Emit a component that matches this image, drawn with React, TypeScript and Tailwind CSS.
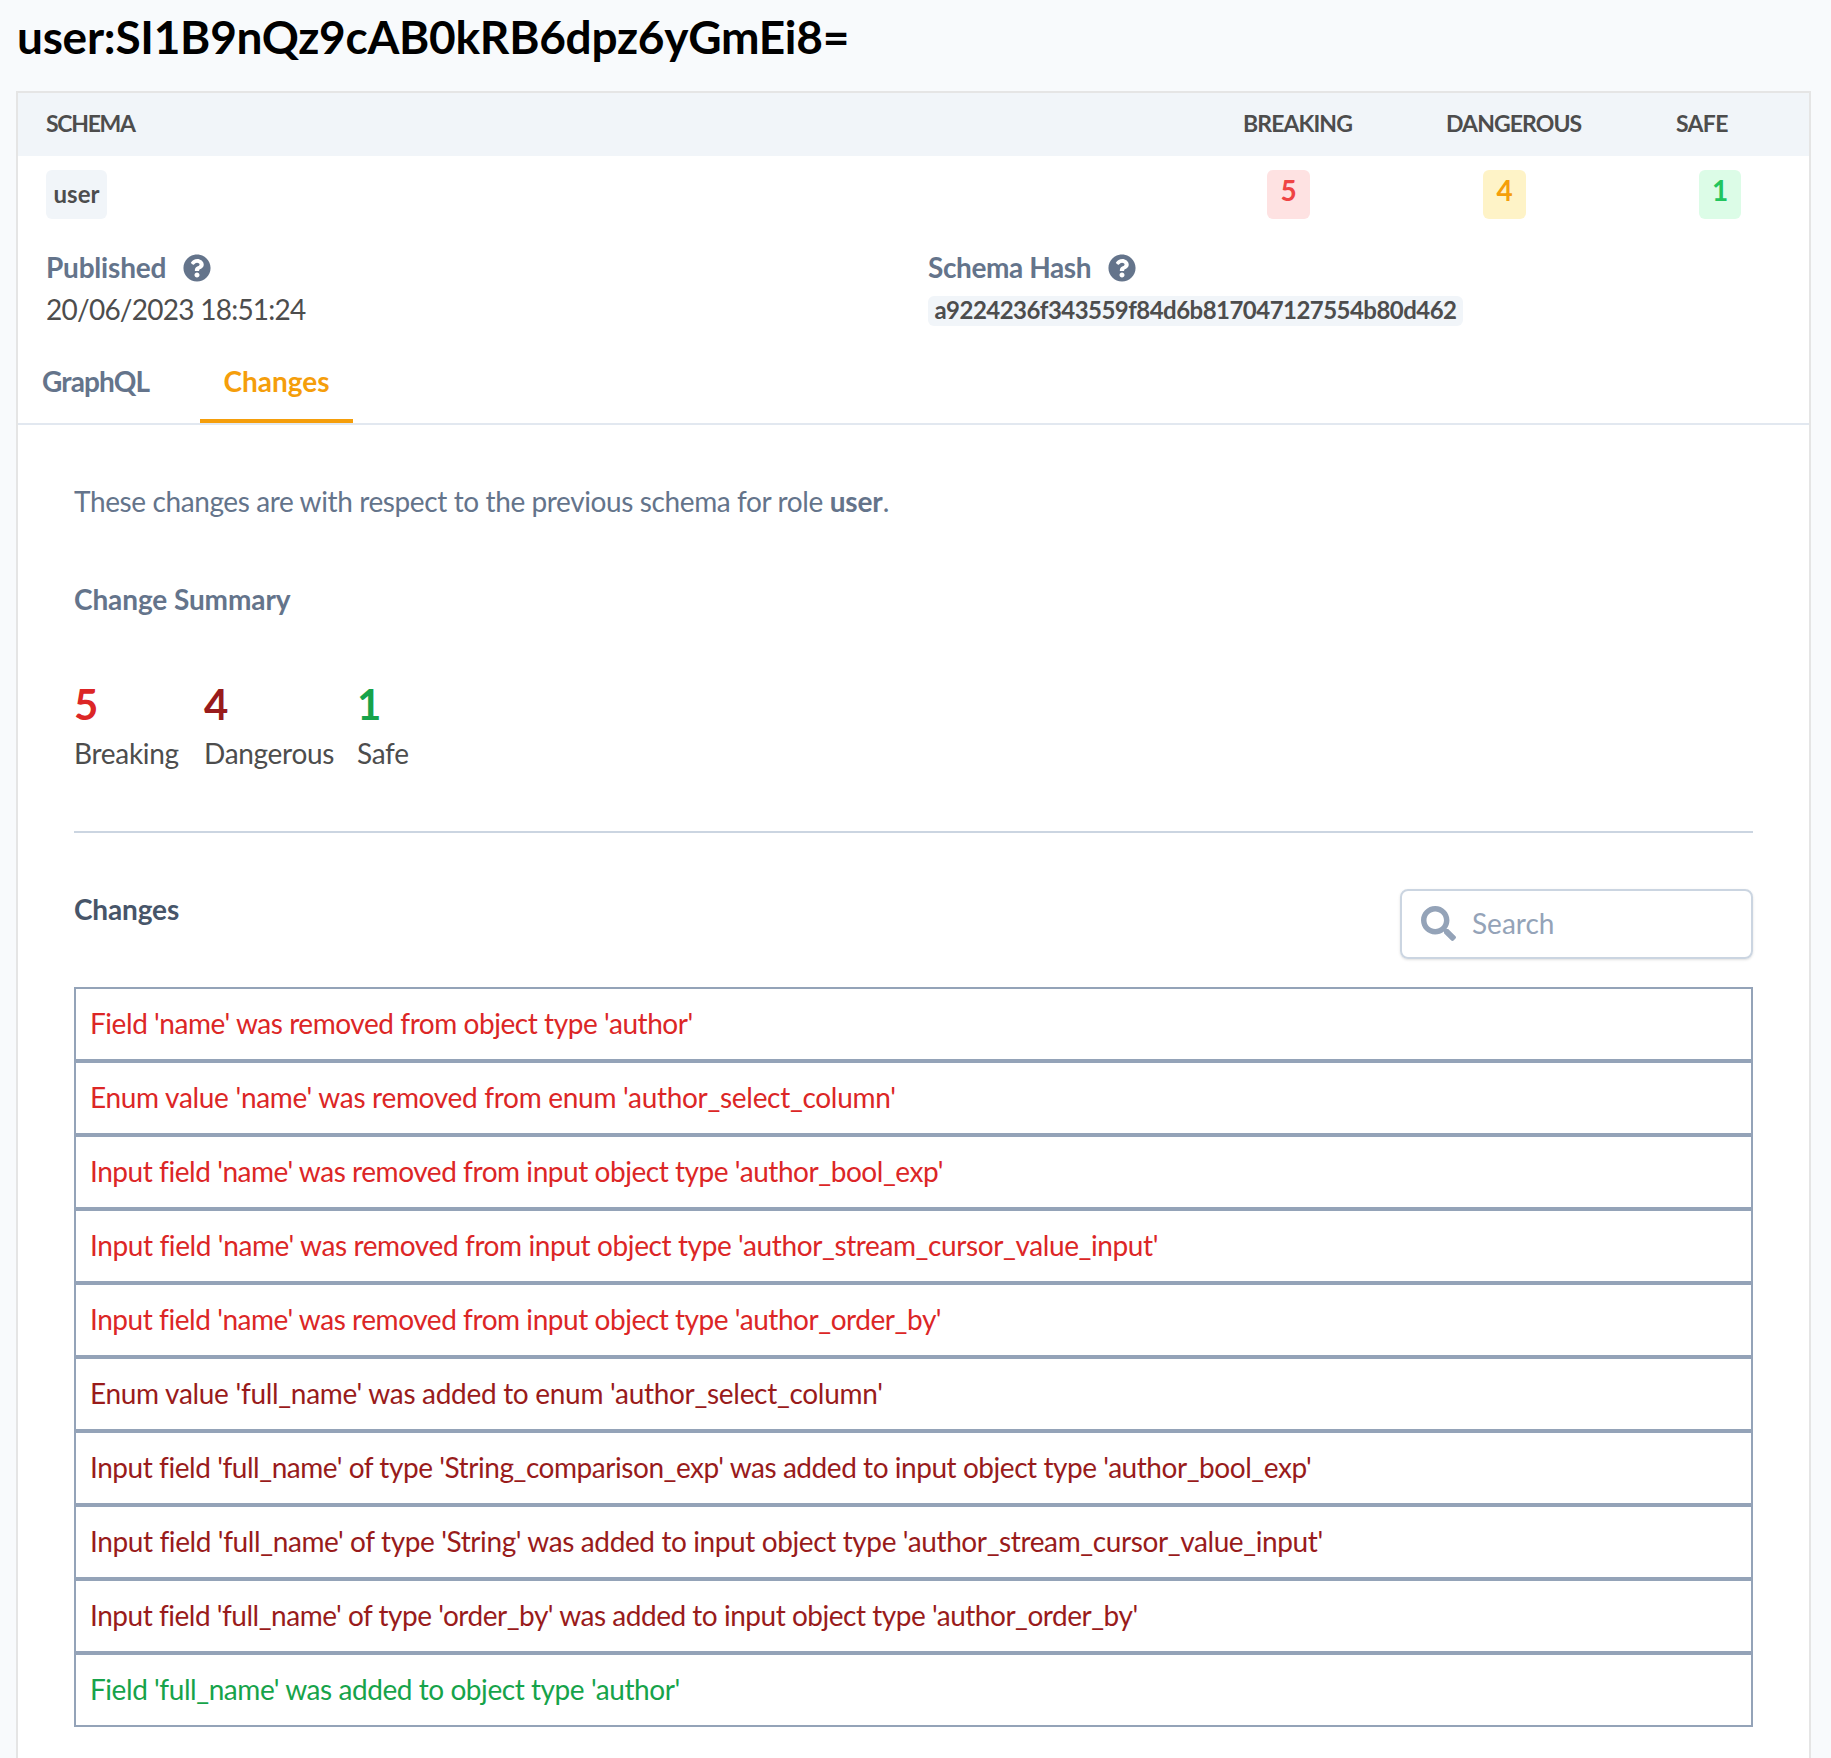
import { FaQuestionCircle, FaSearch } from "react-icons/fa";

const changes = [
  { text: "Field 'name' was removed from object type 'author'", style: "text-[#dc2626] tracking-[-0.44px]" },
  { text: "Enum value 'name' was removed from enum 'author_select_column'", style: "text-[#dc2626] tracking-[-0.3px]" },
  { text: "Input field 'name' was removed from input object type 'author_bool_exp'", style: "text-[#dc2626] tracking-[-0.45px]" },
  { text: "Input field 'name' was removed from input object type 'author_stream_cursor_value_input'", style: "text-[#dc2626] tracking-[-0.39px]" },
  { text: "Input field 'name' was removed from input object type 'author_order_by'", style: "text-[#dc2626] tracking-[-0.45px]" },
  { text: "Enum value 'full_name' was added to enum 'author_select_column'", style: "text-[#991b1b] tracking-[-0.3px]" },
  { text: "Input field 'full_name' of type 'String_comparison_exp' was added to input object type 'author_bool_exp'", style: "text-[#991b1b] tracking-[-0.45px]" },
  { text: "Input field 'full_name' of type 'String' was added to input object type 'author_stream_cursor_value_input'", style: "text-[#991b1b] tracking-[-0.39px]" },
  { text: "Input field 'full_name' of type 'order_by' was added to input object type 'author_order_by'", style: "text-[#991b1b] tracking-[-0.48px]" },
  { text: "Field 'full_name' was added to object type 'author'", style: "text-[#16a34a] tracking-[-0.44px]" },
];

const summary = [
  { count: 5, label: "Breaking", color: "text-[#dc2626]", width: "w-[130px]" },
  { count: 4, label: "Dangerous", color: "text-[#991b1b]", width: "w-[153px]" },
  { count: 1, label: "Safe", color: "text-[#16a34a]", width: "w-[80px]" },
];

function SchemaHeader() {
  return (
    <div className="grid h-[63px] grid-cols-[1fr_203px_230px_133px] bg-[#f1f5f9] pl-[28px] text-[23px] leading-[61px] font-bold">
      <div className="tracking-[-1.3px]">SCHEMA</div>
      <div className="tracking-[-0.9px]">BREAKING</div>
      <div className="tracking-[-0.9px]">DANGEROUS</div>
      <div className="tracking-[-0.7px]">SAFE</div>
    </div>
  );
}

function SchemaRow() {
  return (
    <div className="mt-[14px] grid h-[49px] grid-cols-[1fr_216px_216px_110px] pl-[28px] text-[28px] leading-[40px] font-bold">
      <div className="w-[61px] rounded-md bg-[#f1f5f9] text-center text-[24px] leading-[47px]">user</div>
      <div className="w-[43px] rounded-md bg-[#fee2e2] text-center text-[#ef4444]">5</div>
      <div className="w-[43px] rounded-md bg-[#fef3c7] text-center text-[#f59e0b]">4</div>
      <div className="w-[42px] rounded-md bg-[#dcfce7] text-center text-[#22c55e]">1</div>
    </div>
  );
}

function SchemaMeta() {
  return (
    <div className="mt-[29px] grid grid-cols-[882px_1fr] pl-[28px]">
      <div>
        <div className="flex h-10 text-[#64748b]">
          <span className="w-[137px] text-[28px] leading-[38px] font-bold tracking-[-0.2px]">Published</span>
          <FaQuestionCircle className="mt-[6px] size-[28px]" />
        </div>
        <div className="h-10 text-[28px] leading-[42px] tracking-[-0.75px]">20/06/2023 18:51:24</div>
      </div>
      <div>
        <div className="flex h-10 text-[#64748b]">
          <span className="w-[180px] text-[28px] leading-[38px] font-bold tracking-[-0.4px]">Schema Hash</span>
          <FaQuestionCircle className="mt-[6px] size-[28px]" />
        </div>
        <div className="mt-2 h-[30px] w-[535px] rounded-md bg-[#f1f5f9] text-center text-[24px] leading-[28px] font-bold tracking-[-0.53px]">
          a9224236f343559f84d6b817047127554b80d462
        </div>
      </div>
    </div>
  );
}

function Tabs() {
  return (
    <div className="mt-[10px] flex h-[87px] border-b-2 border-[#e2e8f0] text-[28px] leading-[86px] font-bold">
      <div className="w-[182px] pl-[24px] tracking-[-0.85px] text-[#64748b]">GraphQL</div>
      <div className="h-[85px] w-[153px] border-b-4 border-[#f59e0b] text-center text-[#f59e0b]">Changes</div>
    </div>
  );
}

export default function App() {
  return (
    <div className="h-[1758px] overflow-hidden bg-[#f8fafc] pr-5 pl-4 font-['Lato',sans-serif] text-[#4d4d4d]">
      <h1 className="h-[91px] pl-px text-[46px] leading-[74px] font-bold tracking-[-0.27px] text-black">
        user:SI1B9nQz9cAB0kRB6dpz6yGmEi8=
      </h1>
      <div className="h-[1700px] border-2 border-[#e5e5e5] bg-white">
        <SchemaHeader />
        <SchemaRow />
        <SchemaMeta />
        <Tabs />
        <div className="px-[56px] pt-[56px]">
          <p className="text-[28px] leading-10 tracking-[-0.39px] text-[#64748b]">
            These changes are with respect to the previous schema for role <b className="tracking-[-0.1px]">user</b>.
          </p>
          <h2 className="mt-[58px] text-[28px] leading-10 font-bold tracking-[-0.1px] text-[#64748b]">Change Summary</h2>
          <div className="mt-[60px] flex">
            {summary.map((s) => (
              <div key={s.label} className={s.width}>
                <div className={`text-[42px] leading-[50px] font-bold ${s.color}`}>{s.count}</div>
                <div className="mt-1 text-[28px] leading-10 tracking-[-0.3px]">{s.label}</div>
              </div>
            ))}
          </div>
          <div className="mt-[58px] h-[2px] bg-[#cbd5e1]" />
          <div className="mt-[56px] flex justify-between">
            <h2 className="text-[28px] leading-[40px] font-bold tracking-[-0.15px] text-[#475569]">Changes</h2>
            <div className="flex h-[70px] w-[353px] items-center rounded-lg border-2 border-[#cbd5e1] pb-[2px] pl-[19px] text-[#94a3b8] shadow-sm">
              <FaSearch className="size-[35px]" />
              <span className="ml-[16px] text-[28px] leading-[64px]">Search</span>
            </div>
          </div>
          <div className="mt-[28px]">
            {changes.map((c) => (
              <div
                key={c.text}
                className={`h-[74px] border-2 border-[#94a3b8] pl-[14px] text-[28px] leading-[68px] whitespace-nowrap ${c.style}`}
              >
                {c.text}
              </div>
            ))}
          </div>
        </div>
      </div>
    </div>
  );
}
